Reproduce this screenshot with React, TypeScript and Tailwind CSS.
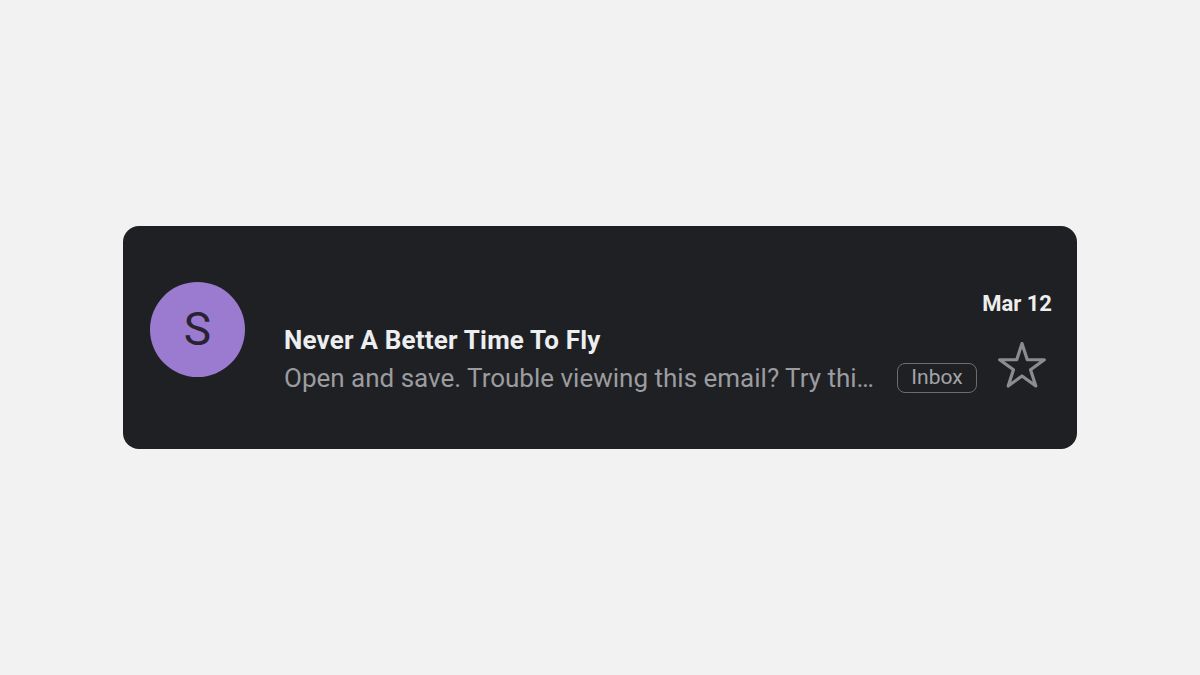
import React from "react";

const StarOutline: React.FC = () => (
  <svg width="50" height="47" viewBox="0 0 50 47" fill="none">
    <polygon
      points="25,1.5 30.28,17.74 47.35,17.74 33.54,27.77 38.81,44.01 25,33.98 11.19,44.01 16.46,27.77 2.65,17.74 19.72,17.74"
      stroke="#8b8c90"
      strokeWidth="3.2"
      strokeLinejoin="round"
    />
  </svg>
);

const App: React.FC = () => {
  return (
    <div className="w-[1200px] h-[675px] bg-[#f2f2f2] flex items-center justify-center font-['Roboto',sans-serif]">
      {/* tarjeta del correo */}
      <div className="w-[954px] h-[223px] mt-[-1px] rounded-[16px] bg-[#1f2023] flex pl-[27px] pr-[25px] pt-[56px]">
        <div className="w-[95px] h-[95px] shrink-0 rounded-full bg-[#9a7bd0] flex items-center justify-center text-[#2a2233] text-[46px] leading-none">
          S
        </div>

        <div className="ml-[39px] mt-[39px]">
          <div className="text-[26px] leading-[38px] font-bold tracking-[0.2px] text-[#eceef0] whitespace-nowrap">
            Never A Better Time To Fly
          </div>
          <div className="flex items-center">
            <div className="w-[594px] text-[26px] leading-[38px] text-[#9b9ca0] whitespace-nowrap overflow-hidden">
              Open and save. Trouble viewing this email? Try thi…
            </div>
            <div className="ml-[19px] h-[30px] w-[80px] rounded-[8px] border-[1.5px] border-[#6b6c70] flex items-center justify-center text-[21px] text-[#a3a4a8]">
              Inbox
            </div>
          </div>
        </div>

        <div className="flex-1 flex flex-col items-end mt-[8px]">
          <div className="text-[22px] leading-[28px] font-bold text-[#eeeeee] whitespace-nowrap">
            Mar 12
          </div>
          <div className="mt-[24px] mr-[5px]">
            <StarOutline />
          </div>
        </div>
      </div>
    </div>
  );
};

export default App;
